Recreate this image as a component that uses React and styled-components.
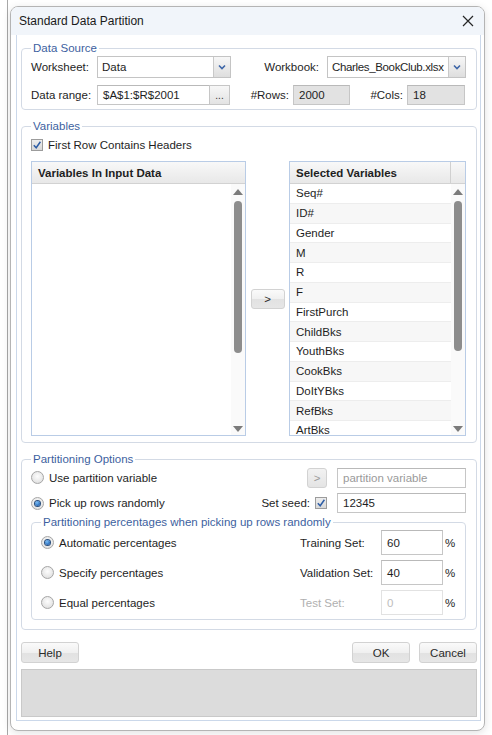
import React from 'react';
import styled, { createGlobalStyle, css } from 'styled-components';

const Global = createGlobalStyle`
  html, body { margin: 0; padding: 0; background: #fff; }
  body { font-family: "Liberation Sans", Arial, sans-serif; font-size: 11.5px; color: #1e1e1e; }
  * { box-sizing: border-box; }
`;

const Page = styled.div`
  width: 492px;
  height: 735px;
  padding: 6px 0 0 10px;
  overflow: hidden;
  background: linear-gradient(to right, #fff 0, #fff 7px, #a8a8a8 7px, #a8a8a8 8px, #fff 8px);
`;

const Dialog = styled.div`
  width: 475px;
  height: 725px;
  border: 1px solid #b4b4b4;
  border-radius: 8px;
  background: #fff;
  display: flex;
  flex-direction: column;
  overflow: hidden;
  box-shadow: 0 2px 8px rgba(0, 0, 0, 0.12);
`;

const TitleBar = styled.div`
  height: 28px;
  flex: none;
  display: flex;
  align-items: center;
  justify-content: space-between;
  padding: 0 10px 0 8px;
  background: #f1f5fa;
  font-size: 12px;
  color: #1a1a1a;
`;

const Frame = styled.div`
  flex: 1;
  margin: 0 3px 9px 5px;
  border: 1px solid #cbd8ea;
  border-top: none;
  padding: 6px 3px 2px 4px;
  display: flex;
  flex-direction: column;
`;

const Group = styled.fieldset`
  margin: ${p => p.$mt || 0}px 0 0 0;
  min-width: 0;
  border: 1px solid #d3dae5;
  border-radius: 4px;
  padding: ${p => p.$pad};
`;

const Legend = styled.legend`
  padding: 0 2px;
  margin: 0;
  color: #3d5fa0;
  font-size: 11.5px;
  line-height: 14px;
`;

const Row = styled.div`
  display: flex;
  align-items: center;
  height: ${p => p.$h || 21}px;
  margin-top: ${p => p.$mt || 0}px;
`;

const Label = styled.span`
  width: ${p => (p.$w ? `${p.$w}px` : 'auto')};
  flex: ${p => (p.$grow ? 1 : 'none')};
  text-align: ${p => (p.$right ? 'right' : 'left')};
  padding-right: ${p => p.$pr || 0}px;
  color: ${p => (p.$disabled ? '#b0b0b0' : '#1e1e1e')};
  white-space: nowrap;
`;

const SelectBox = styled.div`
  width: ${p => p.$w}px;
  height: 22px;
  display: flex;
  border: 1px solid #c4c4c4;
  background: #fff;
  flex: none;
`;

const SelectText = styled.span`
  flex: 1;
  min-width: 0;
  padding-left: 4px;
  display: flex;
  align-items: center;
  white-space: nowrap;
  overflow: hidden;
  letter-spacing: ${p => (p.$tight ? '-0.35px' : '0')};
`;

const DropBtn = styled.span`
  width: 17px;
  flex: none;
  border-left: 1px solid #c9c9c9;
  background: linear-gradient(#f7f7f7, #dedede);
  display: flex;
  align-items: center;
  justify-content: center;
`;

const TextBox = styled.div`
  width: ${p => p.$w}px;
  height: ${p => p.$h || 20}px;
  flex: none;
  display: flex;
  align-items: center;
  padding-left: 5px;
  margin-left: ${p => p.$ml || 0}px;
  border: 1px solid ${p => (p.$faint ? '#e2e2e2' : '#c6c6c6')};
  border-top-color: ${p => (p.$faint ? '#e2e2e2' : '#b9b9b9')};
  background: ${p => (p.$ro ? '#e2e2e2' : '#fff')};
  color: ${p => (p.$muted ? '#9a9a9a' : p.$faint ? '#bdbdbd' : '#1e1e1e')};
  white-space: nowrap;
  overflow: hidden;
`;

const Btn = styled.button`
  font-family: inherit;
  font-size: 11.5px;
  color: ${p => (p.$disabled ? '#9a9a9a' : '#2a2a2a')};
  width: ${p => p.$w}px;
  height: ${p => p.$h || 21}px;
  flex: none;
  padding: 0;
  margin-left: ${p => p.$ml || 0}px;
  border: 1px solid #d2d2d2;
  border-radius: 3px;
  background: ${p => (p.$disabled ? 'linear-gradient(#f2f2f2, #e4e4e4)' : 'linear-gradient(#fafafa 0%, #f0f0f0 50%, #e2e2e2 51%, #e6e6e6 100%)')};
  display: flex;
  align-items: center;
  justify-content: center;
`;

const DotsBtn = styled.span`
  width: 21px;
  height: 20px;
  flex: none;
  margin-left: -1px;
  border: 1px solid #c6c6c6;
  background: linear-gradient(#f7f7f7, #e3e3e3);
  display: flex;
  align-items: flex-end;
  justify-content: center;
  padding-bottom: 3px;
  font-size: 10px;
  line-height: 10px;
  color: #333;
`;

const CheckWrap = styled.span`
  width: 12px;
  height: 12px;
  flex: none;
  border: 1px solid #9c9c9c;
  background: linear-gradient(#ededed, #d8d8d8);
  display: inline-flex;
  align-items: center;
  justify-content: center;
  margin: 0 ${p => p.$mr || 0}px 0 ${p => p.$ml || 0}px;
`;

const RadioDot = styled.span`
  width: 13px;
  height: 13px;
  flex: none;
  border-radius: 50%;
  border: 1px solid #a6a6a6;
  background: radial-gradient(circle at 50% 40%, #fdfdfd 0%, #e6e6e6 65%, #d2d2d2 100%);
  position: relative;
  margin-right: 5px;
  ${p => p.$checked && css`
    &::after {
      content: '';
      position: absolute;
      left: 3px;
      top: 3px;
      width: 5px;
      height: 5px;
      border-radius: 50%;
      background: radial-gradient(circle at 40% 35%, #7cc0f7, #1f62b4 75%);
      box-shadow: 0 0 0 1px #2b4f7c;
    }
  `}
`;

const Option = styled.span`
  display: flex;
  align-items: center;
  flex: 1;
`;

const RightGroup = styled.span`
  display: flex;
  align-items: center;
`;

/* Lists */
const ListsRow = styled.div`
  display: flex;
  align-items: center;
  height: 275px;
  margin-top: 8px;
`;

const ListBox = styled.div`
  width: ${p => p.$w}px;
  height: 100%;
  flex: none;
  border: 1px solid #b9cce6;
  display: flex;
  flex-direction: column;
  background: #fff;
`;

const ListHeader = styled.div`
  height: 22px;
  flex: none;
  display: flex;
  background: linear-gradient(#f8f8f8, #e8e8e8);
  border-bottom: 1px solid #d2d2d2;
  font-weight: bold;
`;

const HeaderCell = styled.span`
  flex: 1;
  display: flex;
  align-items: center;
  padding-left: 6px;
`;

const HeaderStub = styled.span`
  width: 15px;
  flex: none;
  border-left: 1px solid #d0d0d0;
`;

const ListBody = styled.div`
  flex: 1;
  display: flex;
  min-height: 0;
`;

const Items = styled.div`
  flex: 1;
  overflow: hidden;
`;

const Item = styled.div`
  height: 19.75px;
  display: flex;
  align-items: center;
  padding-left: 6px;
  border-bottom: 1px solid #ededed;
  background: ${p => (p.$alt ? '#f7f7f7' : '#fff')};
  white-space: nowrap;
`;

const Scroll = styled.div`
  width: 14px;
  flex: none;
  display: flex;
  flex-direction: column;
  align-items: center;
  padding: 5px 0 3px;
  background: #fafafa;
`;

const Thumb = styled.span`
  width: 8px;
  height: ${p => p.$h}px;
  margin-top: 6px;
  border-radius: 4px;
  background: #8d8d8d;
`;

const Spacer = styled.span`
  flex: 1;
`;

const Mid = styled.div`
  flex: 1;
  display: flex;
  justify-content: center;
`;

const Inner = styled.div`
  display: flex;
  flex-direction: column;
  gap: 5px;
`;

const Pct = styled.span`
  margin-left: 2px;
  width: 10px;
`;

const Footer = styled.div`
  display: flex;
  justify-content: space-between;
  margin-top: 12px;
`;

const Status = styled.div`
  height: 48px;
  margin-top: 6px;
  background: #dcdcdc;
  border: 1px solid #c9c9c9;
`;

const Chevron = () => (
  <svg width="8" height="6" viewBox="0 0 8 6">
    <polyline points="1,1.5 4,4.5 7,1.5" fill="none" stroke="#3e66a8" strokeWidth="1.6" />
  </svg>
);

const Tick = () => (
  <svg width="10" height="10" viewBox="0 0 10 10">
    <path d="M1.8 5.2 L4.2 7.8 L8.4 1.8" fill="none" stroke="#2e5ea6" strokeWidth="1.5" />
  </svg>
);

const Up = () => (
  <svg width="10" height="6" viewBox="0 0 10 6">
    <polygon points="0,6 5,0 10,6" fill="#7b7b7b" />
  </svg>
);

const Down = () => (
  <svg width="10" height="6" viewBox="0 0 10 6">
    <polygon points="0,0 10,0 5,6" fill="#7b7b7b" />
  </svg>
);

const Close = () => (
  <svg width="12" height="12" viewBox="0 0 12 12">
    <path d="M1 1 L11 11 M11 1 L1 11" stroke="#262626" strokeWidth="1.2" />
  </svg>
);

const Select = ({ w, value, tight }) => (
  <SelectBox $w={w}>
    <SelectText $tight={tight}>{value}</SelectText>
    <DropBtn><Chevron /></DropBtn>
  </SelectBox>
);

const Checkbox = props => (
  <CheckWrap {...props}><Tick /></CheckWrap>
);

const Radio = ({ checked, children }) => (
  <Option>
    <RadioDot $checked={checked} />
    {children}
  </Option>
);

const selected = ['Seq#', 'ID#', 'Gender', 'M', 'R', 'F', 'FirstPurch', 'ChildBks', 'YouthBks', 'CookBks', 'DoItYBks', 'RefBks', 'ArtBks'];

export default function App() {
  return (
    <Page>
      <Global />
      <Dialog>
        <TitleBar>
          <span>Standard Data Partition</span>
          <Close />
        </TitleBar>
        <Frame>
          <Group $pad="1px 10px 4px 9px">
            <Legend>Data Source</Legend>
            <Row $h={22}>
              <Label $w={66}>Worksheet:</Label>
              <Select w={134} value="Data" />
              <Label $grow $right $pr={8}>Workbook:</Label>
              <Select w={139} value="Charles_BookClub.xlsx" tight />
            </Row>
            <Row $h={20} $mt={7}>
              <Label $w={66}>Data range:</Label>
              <TextBox $w={113}>$A$1:$R$2001</TextBox>
              <DotsBtn>...</DotsBtn>
              <Label $w={59} $right>#Rows:</Label>
              <TextBox $w={57} $ml={4} $ro>2000</TextBox>
              <Label $w={53} $right>#Cols:</Label>
              <TextBox $w={58} $ml={4} $ro>18</TextBox>
            </Row>
          </Group>

          <Group $mt={9} $pad="4px 10px 6px 9px">
            <Legend>Variables</Legend>
            <Row $h={16}>
              <Checkbox $mr={5} />
              <span>First Row Contains Headers</span>
            </Row>
            <ListsRow>
              <ListBox $w={215}>
                <ListHeader>
                  <HeaderCell>Variables In Input Data</HeaderCell>
                </ListHeader>
                <ListBody>
                  <Items />
                  <Scroll>
                    <Up />
                    <Thumb $h={152} />
                    <Spacer />
                    <Down />
                  </Scroll>
                </ListBody>
              </ListBox>
              <Mid>
                <Btn $w={34} $h={20}>&gt;</Btn>
              </Mid>
              <ListBox $w={177}>
                <ListHeader>
                  <HeaderCell>Selected Variables</HeaderCell>
                  <HeaderStub />
                </ListHeader>
                <ListBody>
                  <Items>
                    {selected.map((v, i) => (
                      <Item key={v} $alt={i % 2 === 1}>{v}</Item>
                    ))}
                  </Items>
                  <Scroll>
                    <Up />
                    <Thumb $h={150} />
                    <Spacer />
                    <Down />
                  </Scroll>
                </ListBody>
              </ListBox>
            </ListsRow>
          </Group>

          <Group $mt={9} $pad="1px 10px 9px 9px">
            <Legend>Partitioning Options</Legend>
            <Row $h={21}>
              <Radio>Use partition variable</Radio>
              <RightGroup>
                <Btn $w={20} $h={20} $disabled>&gt;</Btn>
                <TextBox $w={129} $ml={10} $muted>partition variable</TextBox>
              </RightGroup>
            </Row>
            <Row $h={20} $mt={5}>
              <Radio checked>Pick up rows randomly</Radio>
              <RightGroup>
                <span>Set seed:</span>
                <Checkbox $ml={5} $mr={10} />
                <TextBox $w={129}>12345</TextBox>
              </RightGroup>
            </Row>
            <Group $mt={2} $pad="1px 10px 4px 9px">
              <Legend>Partitioning percentages when picking up rows randomly</Legend>
              <Inner>
                <Row $h={25}>
                  <Radio checked>Automatic percentages</Radio>
                  <RightGroup>
                    <Label $w={81}>Training Set:</Label>
                    <TextBox $w={62} $h={25}>60</TextBox>
                    <Pct>%</Pct>
                  </RightGroup>
                </Row>
                <Row $h={25}>
                  <Radio>Specify percentages</Radio>
                  <RightGroup>
                    <Label $w={81}>Validation Set:</Label>
                    <TextBox $w={62} $h={25}>40</TextBox>
                    <Pct>%</Pct>
                  </RightGroup>
                </Row>
                <Row $h={25}>
                  <Radio>Equal percentages</Radio>
                  <RightGroup>
                    <Label $w={81} $disabled>Test Set:</Label>
                    <TextBox $w={62} $h={25} $faint>0</TextBox>
                    <Pct>%</Pct>
                  </RightGroup>
                </Row>
              </Inner>
            </Group>
          </Group>

          <Footer>
            <Btn $w={58}>Help</Btn>
            <RightGroup>
              <Btn $w={58}>OK</Btn>
              <Btn $w={58} $ml={9}>Cancel</Btn>
            </RightGroup>
          </Footer>
          <Status />
        </Frame>
      </Dialog>
    </Page>
  );
}
